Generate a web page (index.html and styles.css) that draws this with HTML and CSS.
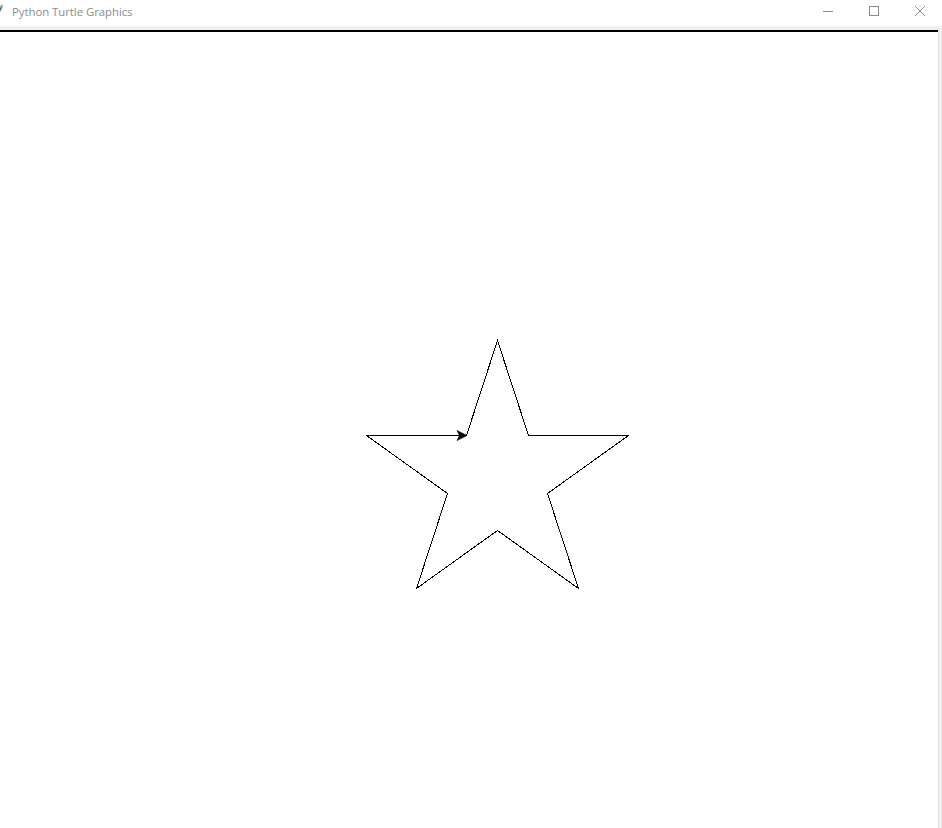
FILE: index.html
```html
<!DOCTYPE html>
<html>
<head>
<meta charset="utf-8">
<title>Python Turtle Graphics</title>
<link rel="stylesheet" href="styles.css">
</head>
<body>
<div class="window">
  <div class="titlebar">
    <div class="title-left">
      <svg class="app-icon" width="8" height="16" viewBox="0 0 8 16">
        <path d="M-2 15 L4 3 L6 4 L1 14 Z" fill="#3a6ea5"/>
        <path d="M3 5 L5 2 L6 3 L4 6 Z" fill="#e8c640"/>
      </svg>
      <span class="title-text">Python Turtle Graphics</span>
    </div>
    <div class="controls">
      <span class="ctrl">
        <svg width="12" height="12" viewBox="0 0 12 12"><path d="M1 6.5 H11" stroke="#8a8a8a" stroke-width="1" shape-rendering="crispEdges"/></svg>
      </span>
      <span class="ctrl">
        <svg width="12" height="12" viewBox="0 0 12 12"><rect x="1.5" y="1.5" width="9" height="9" fill="none" stroke="#8a8a8a" stroke-width="1" shape-rendering="crispEdges"/></svg>
      </span>
      <span class="ctrl">
        <svg width="12" height="12" viewBox="0 0 12 12"><path d="M1 1 L11 11 M11 1 L1 11" stroke="#8a8a8a" stroke-width="1"/></svg>
      </span>
    </div>
  </div>
  <div class="frame-top"></div>
  <div class="body-row">
    <div class="canvas">
      <svg class="drawing" width="938" height="794" viewBox="0 32 938 794">
        <polyline points="466.5,435.5 497.5,340.5 528.5,435.5 628.5,435.5 547.5,493.5 578.5,588.5 497.5,530.5 416.5,588.5 447.5,493.5 366.5,435.5 466.5,435.5" fill="none" stroke="#000" stroke-width="1" shape-rendering="crispEdges"/>
        <polygon points="467,435.5 457,430.5 459.5,435.5 457,440.5" fill="#000" stroke="#000" stroke-width="0.6"/>
      </svg>
    </div>
    <div class="frame-right"></div>
  </div>
</div>
</body>
</html>
```

FILE: styles.css
```css
html, body {
  margin: 0;
  padding: 0;
  background: #ffffff;
  overflow: hidden;
}

.window {
  width: 942px;
  height: 828px;
  display: flex;
  flex-direction: column;
  background: #ffffff;
}

.titlebar {
  height: 26px;
  display: flex;
  align-items: center;
  justify-content: space-between;
  background: #ffffff;
}

.title-left {
  display: flex;
  align-items: center;
  height: 100%;
}

.app-icon {
  display: block;
  margin-left: -3px;
  margin-top: -6px;
}

.title-text {
  font-family: "Open Sans", "Noto Sans", sans-serif;
  font-size: 11.4px;
  color: #8c8c8c;
  margin-left: 7px;
  margin-top: -4px;
  letter-spacing: -0.05px;
}

.controls {
  display: flex;
  align-items: center;
  height: 100%;
  margin-top: -4px;
  margin-right: -1px;
}

.ctrl {
  width: 46px;
  height: 100%;
  display: flex;
  align-items: center;
  justify-content: center;
}

.ctrl svg {
  display: block;
}

.frame-top {
  height: 4px;
  background: #f0f0f0;
}

.body-row {
  flex: 1;
  display: flex;
}

.canvas {
  width: 938px;
  border-top: 2px solid #000;
  background: #ffffff;
}

.drawing {
  display: block;
}

.frame-right {
  flex: 1;
  background: #f0f0f0;
  border-left: 1px solid #e2e2e2;
}
```
